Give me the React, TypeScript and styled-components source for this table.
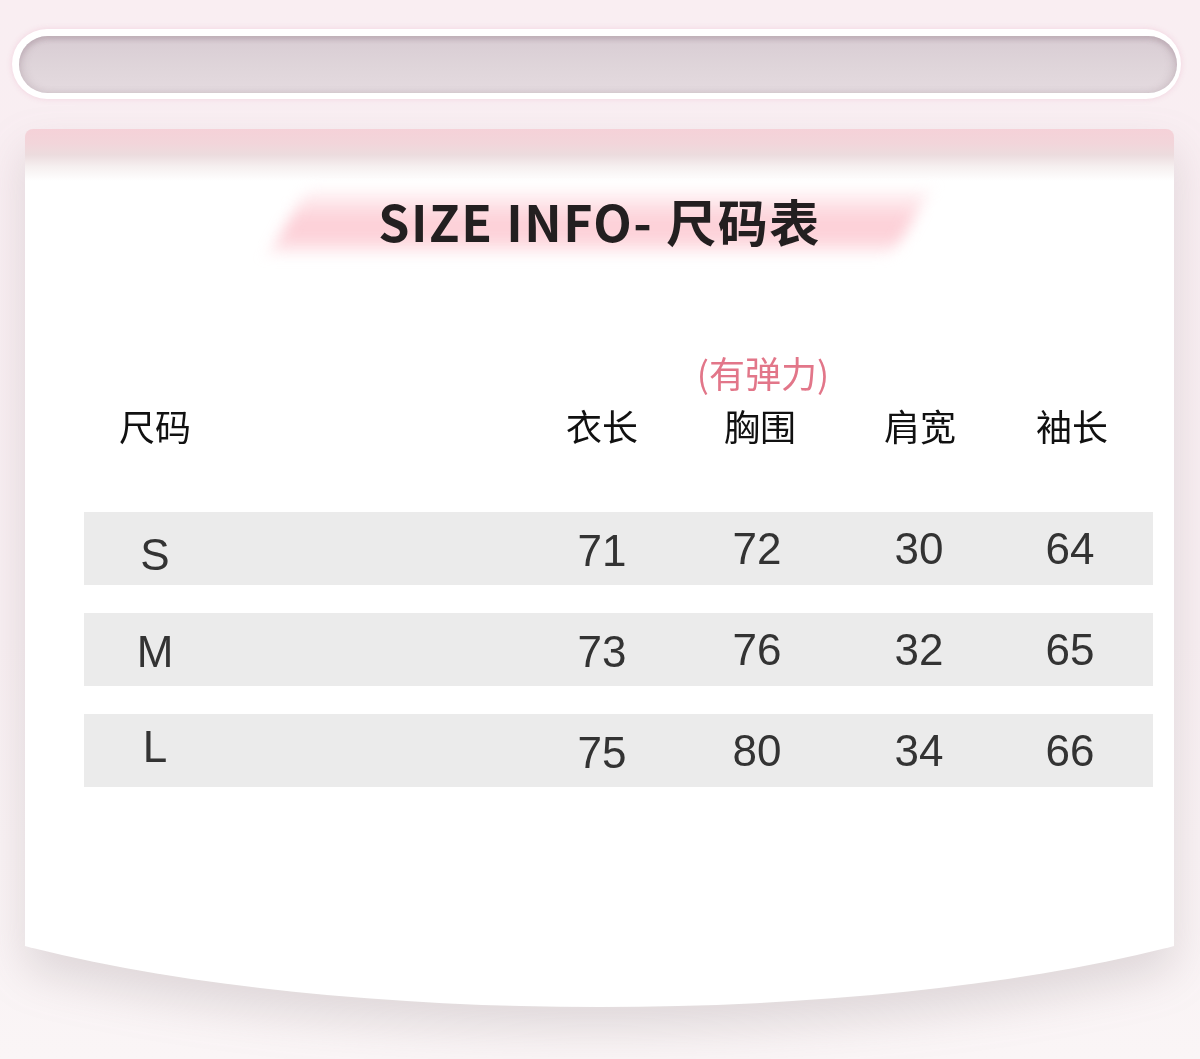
import React from "react";
import styled, { createGlobalStyle } from "styled-components";

const GlobalStyle = createGlobalStyle`
  html, body { margin: 0; padding: 0; background: #f9eef2; }
  body { font-family: "Noto Sans CJK SC", "Noto Sans", sans-serif; }
`;

const COLS = "142px 1fr 156px 154px 170px 132px";

const Page = styled.div`
  width: 1200px;
  height: 1059px;
  overflow: hidden;
  background: linear-gradient(180deg, #f9eef2 0%, #f8eff2 60%, #faf5f6 100%);
  padding-top: 29px;
  box-sizing: border-box;
  display: flex;
  flex-direction: column;
`;

const TopBar = styled.div`
  margin: 0 19px 0 12px;
  height: 70px;
  box-sizing: border-box;
  border-radius: 35px;
  background: #ffffff;
  padding: 7px 4px 6px 7px;
  box-shadow: 0 0 5px 1px rgba(243, 214, 225, 0.9);
`;

const BarInner = styled.div`
  height: 100%;
  border-radius: 29px;
  background: linear-gradient(180deg, #d8ccd3 0%, #dfd5da 55%, #e4dadf 100%);
  box-shadow: inset 0 4px 4px rgba(150, 125, 138, 0.22),
    inset 5px 0 7px rgba(150, 125, 138, 0.18),
    inset -5px 0 7px rgba(150, 125, 138, 0.18);
`;

const CardWrap = styled.div`
  margin: 30px 26px 0 25px;
  filter: drop-shadow(0 22px 22px rgba(120, 105, 110, 0.2));
  display: flex;
  flex-direction: column;
`;

const CardBody = styled.div`
  height: 817px;
  border-radius: 8px 8px 0 0;
  background: linear-gradient(
    180deg,
    #f5d1d8 0px,
    #f2d5da 14px,
    #ecdcde 26px,
    #f6f0f0 38px,
    #ffffff 52px
  );
  display: flex;
  flex-direction: column;
  align-items: center;
`;

const CardFoot = styled.div`
  height: 62px;
  background: #ffffff;
  clip-path: ellipse(800px 201px at 50% -139px);
  margin-top: -1px;
`;

const TitleRow = styled.div`
  position: relative;
  margin-top: 59px;
  width: 652px;
  height: 64px;
  display: flex;
  align-items: center;
  justify-content: center;

  &::before {
    content: "";
    position: absolute;
    left: 14px;
    right: 14px;
    top: 4px;
    bottom: 2px;
    transform: skewX(-28deg);
    filter: blur(8px);
    background: linear-gradient(
      180deg,
      rgba(253, 206, 213, 0.25) 0%,
      rgba(252, 192, 202, 0.8) 55%,
      rgba(252, 198, 207, 0.6) 100%
    );
  }
`;

const Title = styled.h1`
  position: relative;
  margin: 0;
  font-family: "Noto Sans CJK SC", "Noto Sans", sans-serif;
  font-weight: 700;
  font-size: 50px;
  letter-spacing: 1.5px;
  line-height: 1;
  color: #231f20;
  white-space: nowrap;
`;

const Table = styled.div`
  margin-top: 98px;
  width: 1069px;
  margin-left: 59px;
  margin-right: 21px;
  align-self: flex-start;
  display: flex;
  flex-direction: column;
`;

const HeadGrid = styled.div`
  display: grid;
  grid-template-columns: ${COLS};
  padding-right: 17px;
  align-items: end;
`;

const HeadCell = styled.div<{ $dx?: number }>`
  display: flex;
  flex-direction: column;
  align-items: center;
  transform: translateX(${(p) => p.$dx ?? 0}px);
`;

const Note = styled.span`
  font-size: 36px;
  line-height: 44px;
  color: #e27689;
  margin-bottom: 9px;
  white-space: nowrap;
  padding-left: 6px;
`;

const Label = styled.span`
  font-size: 36px;
  line-height: 44px;
  color: #111111;
  white-space: nowrap;
`;

const Rows = styled.div`
  margin-top: 65px;
  display: flex;
  flex-direction: column;
  gap: 28px;
`;

const Row = styled.div`
  display: grid;
  grid-template-columns: ${COLS};
  padding-right: 17px;
  height: 73px;
  background: #ebebeb;
  align-items: center;
`;

const Cell = styled.span<{ $dy?: number }>`
  font-family: "Liberation Sans", Arial, sans-serif;
  font-size: 44px;
  line-height: 1;
  color: #333333;
  text-align: center;
  transform: translateY(${(p) => p.$dy ?? 0}px);
`;

const headers = ["尺码", "", "衣长", "胸围", "肩宽", "袖长"];
const headShift = [0, 0, 0, 3, 1, 2];

const data: { size: string; dy: number; vals: string[] }[] = [
  { size: "S", dy: 6, vals: ["71", "72", "30", "64"] },
  { size: "M", dy: 2, vals: ["73", "76", "32", "65"] },
  { size: "L", dy: -4, vals: ["75", "80", "34", "66"] },
];

export default function App() {
  return (
    <>
      <GlobalStyle />
      <Page>
        <TopBar>
          <BarInner />
        </TopBar>
        <CardWrap>
          <CardBody>
            <TitleRow>
              <Title>SIZE INFO- 尺码表</Title>
            </TitleRow>
            <Table>
              <HeadGrid>
                {headers.map((h, i) => (
                  <HeadCell key={i} $dx={headShift[i]}>
                    {h === "胸围" && <Note>(有弹力)</Note>}
                    {h && <Label>{h}</Label>}
                  </HeadCell>
                ))}
              </HeadGrid>
              <Rows>
                {data.map((r) => (
                  <Row key={r.size}>
                    <Cell $dy={r.dy}>{r.size}</Cell>
                    <span />
                    {r.vals.map((v, i) => (
                      <Cell key={i} $dy={i === 0 ? 2 : 0}>
                        {v}
                      </Cell>
                    ))}
                  </Row>
                ))}
              </Rows>
            </Table>
          </CardBody>
          <CardFoot />
        </CardWrap>
      </Page>
    </>
  );
}
